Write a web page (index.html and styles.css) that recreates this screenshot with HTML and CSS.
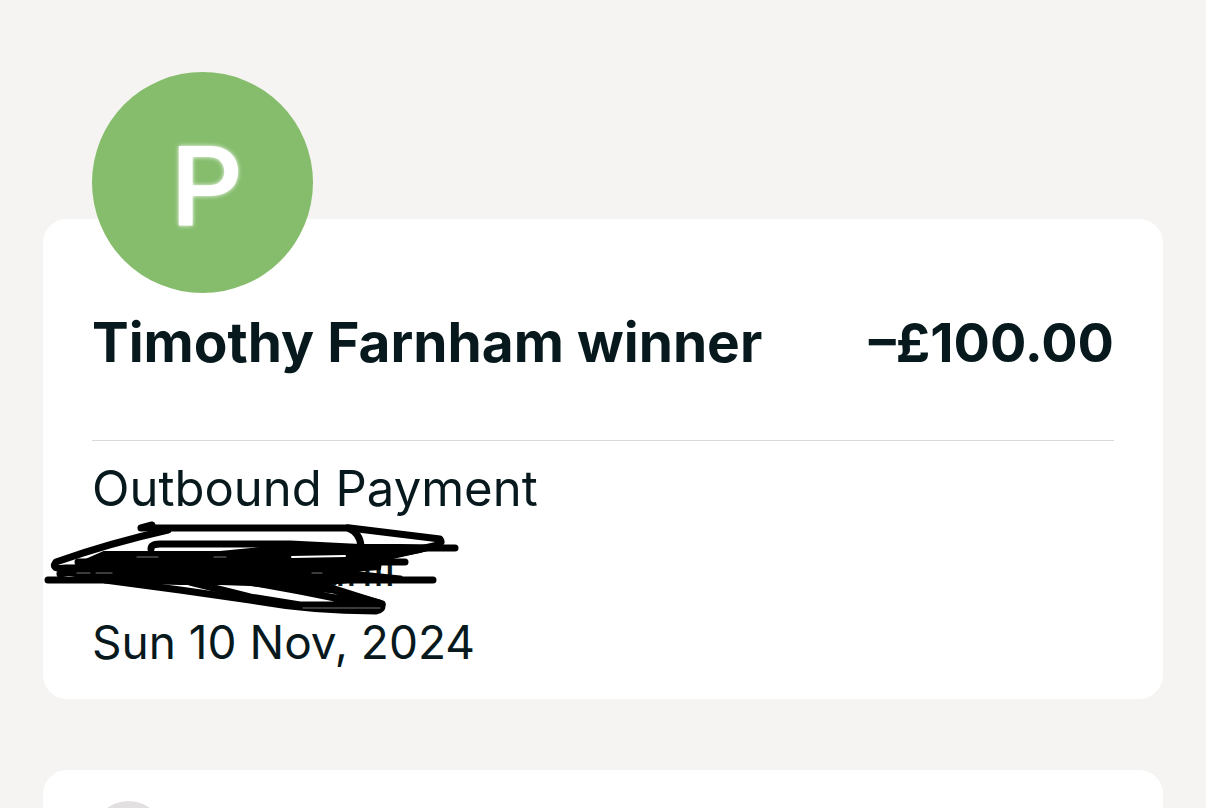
FILE: index.html
```
<!DOCTYPE html>
<html lang="en">
<head>
<meta charset="utf-8">
<meta name="viewport" content="width=device-width, initial-scale=1">
<title>Outbound Payment</title>
<link rel="stylesheet" href="styles.css">
</head>
<body>
<main class="page">
  <article class="card payment">
    <div class="avatar">P</div>
    <header class="summary">
      <h1 class="payee">Timothy Farnham winner</h1>
      <span class="amount">–£100.00</span>
    </header>
    <div class="details">
      <p class="detail">Outbound Payment</p>
      <p class="detail redacted">
        <span class="remnant">anll</span>
        <svg class="scribble" viewBox="40 510 424 116" aria-hidden="true">
          <path class="thick" d="M79 563L104 552 220 552 290 545 400 545 440 546 420 552 388 558 381 561 380 569 350 571 386 577 340 583 316 582 330 592 300 590 250 585 220 584 180 584 110 582 64 574Z"/>
          <path d="M141 528L152 525M141 528H350L440 539Q443 543 438 545L390 556"/>
          <path d="M168 530Q110 543 56 562Q50 570 66 568L300 566"/>
          <path d="M151 549Q151 544 160 544H290L370 548 455 548"/>
          <path d="M348 528Q360 533 361 546"/>
          <path d="M78 562H405M60 574L100 566 370 564"/>
          <path d="M48 580H433M350 574L400 579"/>
          <path d="M105 580L180 590 250 600Q310 611 376 611Q383 610 382 604L316 583"/>
          <path d="M190 582L250 597 300 605H376M250 582L300 591 350 601 382 604M300 581L380 603"/>
          <path class="light" d="M292 557L345 556"/>
          <path class="gap" d="M303 608H380M137 557H158M214 557H226M77 573H90M96 573H112M312 573H322"/>
        </svg>
      </p>
      <p class="detail date">Sun 10 Nov, 2024</p>
    </div>
  </article>
  <section class="card next">
    <div class="dot"></div>
  </section>
</main>
</body>
</html>
```
FILE: styles.css
```
* { box-sizing: border-box; }
html { background: #f5f4f2; }
body {
  margin: 0;
  color: #07191d;
  font-family: Inter, "Liberation Sans", sans-serif;
}
.page {
  display: flex;
  flex-direction: column;
  gap: 71px;
  height: 100vh;
  padding: 219px 43px 0;
  overflow: hidden;
}
.card {
  background: #fff;
  border-radius: 24px;
  padding: 0 49px;
}
.payment {
  flex: none;
  padding-bottom: 18px;
}
.avatar {
  display: flex;
  align-items: center;
  justify-content: center;
  width: 221px;
  height: 221px;
  margin-top: -147px;
  padding: 10px 0 0 8px;
  border-radius: 50%;
  background: #86bd6d;
  color: #fff;
  font-family: Roboto, sans-serif;
  font-size: 112px;
  font-weight: 500;
  text-shadow: 0 0 4px #fff;
}
.summary {
  display: flex;
  align-items: center;
  justify-content: space-between;
  gap: 24px;
  padding: 12px 0 60px;
  border-bottom: 1px solid #d8dadb;
  line-height: 75px;
}
.payee, .amount {
  margin: 0;
  font-size: 55px;
  font-weight: 700;
  white-space: nowrap;
}
.amount { font-size: 54px; }
.details { padding-top: 9px; }
.detail {
  margin: 0;
  font-size: 49px;
  font-weight: 400;
  line-height: 77px;
}
.date { font-size: 46px; }
.redacted {
  position: relative;
  padding: 8px 0 0 228px;
  font-size: 46px;
  line-height: 69px;
}
.scribble {
  position: absolute;
  left: -52px;
  top: -17px;
  width: 424px;
  height: 116px;
  fill: none;
  stroke: #000;
  stroke-width: 7px;
  stroke-linecap: round;
  stroke-linejoin: round;
}
.scribble .thick {
  fill: #000;
  stroke-width: 2px;
}
.scribble .light {
  stroke: #fff;
  stroke-width: 2px;
}
.scribble .gap {
  stroke: #777;
  stroke-width: 1px;
}
.next {
  flex: 1;
  border-radius: 24px 24px 0 0;
  padding-top: 31px;
  overflow: hidden;
}
.dot {
  width: 73px;
  height: 73px;
  border-radius: 50%;
  background: #e3e0e2;
}
```
